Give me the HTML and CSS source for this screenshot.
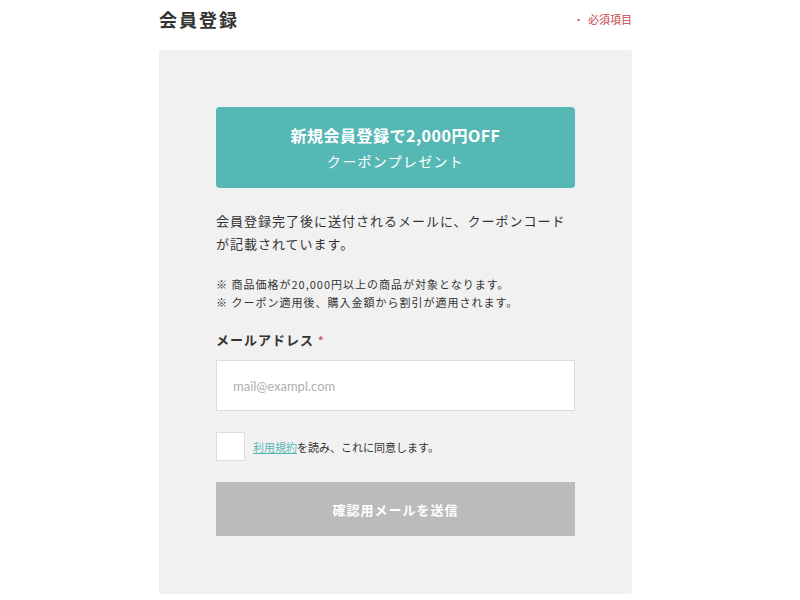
FILE: index.html
```html
<!DOCTYPE html>
<html lang="ja">
<head>
    <meta charset="UTF-8">
    <meta name="viewport" content="width=device-width, initial-scale=1.0">
    <title>会員登録</title>
    <link rel="stylesheet" href="styles.css">
</head>
<body>
    <div class="register">
        <!-- Heading -->
        <div class="register-head">
            <h1 class="register-title">会員登録</h1>
            <span class="required-note"><span class="required-dot">•</span>必須項目</span>
        </div>

        <!-- Form panel -->
        <div class="register-panel">
            <div class="coupon-banner">
                <p class="coupon-main">新規会員登録で2,000円OFF</p>
                <p class="coupon-sub">クーポンプレゼント</p>
            </div>

            <p class="lead">会員登録完了後に送付されるメールに、クーポンコードが記載されています。</p>

            <ul class="notes">
                <li>※ 商品価格が20,000円以上の商品が対象となります。</li>
                <li>※ クーポン適用後、購入金額から割引が適用されます。</li>
            </ul>

            <label class="field-label" for="email">メールアドレス<span class="mark">*</span></label>
            <input class="field-input" type="email" id="email" placeholder="mail@exampl.com">

            <label class="agree">
                <span class="agree-box"></span>
                <span class="agree-text"><a href="#" class="agree-link">利用規約</a>を読み、これに同意します。</span>
            </label>

            <button class="submit-btn" type="button" disabled>確認用メールを送信</button>
        </div>
    </div>
</body>
</html>
```

FILE: styles.css
```css
* {
    margin: 0;
    padding: 0;
    box-sizing: border-box;
}

body {
    background-color: #ffffff;
    color: #333333;
    font-family: 'Noto Sans CJK JP', 'Noto Sans', sans-serif;
}

.register {
    width: 473px;
    margin-left: 159px;
}

/* Heading */
.register-head {
    display: flex;
    align-items: center;
    justify-content: space-between;
    height: 37px;
    margin-bottom: 13px;
}

.register-title {
    font-size: 18px;
    font-weight: 700;
    letter-spacing: 2px;
    color: #333;
    line-height: 1;
}

.required-note {
    font-size: 11px;
    color: #c9474a;
    display: flex;
    align-items: center;
}

.required-dot {
    font-size: 8px;
    margin-right: 8px;
}

/* Panel */
.register-panel {
    background-color: #f1f1f1;
    border-radius: 3px;
    padding: 57px 57px 58px;
}

.coupon-banner {
    background-color: #56b8b5;
    border-radius: 4px;
    height: 81px;
    display: flex;
    flex-direction: column;
    align-items: center;
    justify-content: center;
    color: #ffffff;
}

.coupon-main {
    font-size: 16px;
    font-weight: 700;
    letter-spacing: 0.5px;
    line-height: 26px;
}

.coupon-sub {
    font-size: 14px;
    letter-spacing: 1.3px;
    line-height: 26px;
}

.lead {
    margin-top: 21px;
    font-size: 13px;
    line-height: 23px;
    letter-spacing: 1px;
    color: #333;
}

.notes {
    list-style: none;
    margin-top: 20px;
    font-size: 11px;
    line-height: 18px;
    letter-spacing: 1px;
    color: #333;
}

.field-label {
    display: block;
    margin-top: 19px;
    font-size: 13px;
    font-weight: 700;
    letter-spacing: 1px;
    line-height: 20px;
}

.mark {
    color: #d05a5a;
    font-size: 11px;
    margin-left: 4px;
    vertical-align: top;
}

.field-input {
    display: block;
    width: 100%;
    height: 51px;
    margin-top: 10px;
    border: 1px solid #dddddd;
    background-color: #ffffff;
    padding: 0 16px;
    font-family: 'Lato', sans-serif;
    font-size: 13px;
    color: #333;
    outline: none;
}

.field-input::placeholder {
    color: #b0b0b0;
}

.agree {
    display: flex;
    align-items: center;
    margin-top: 21px;
    cursor: pointer;
}

.agree-box {
    width: 29px;
    height: 29px;
    background-color: #ffffff;
    border: 1px solid #dddddd;
    margin-right: 8px;
    flex-shrink: 0;
}

.agree-text {
    font-size: 11px;
    color: #333;
}

.agree-link {
    color: #56b8b5;
    text-decoration: underline;
}

.submit-btn {
    display: block;
    width: 100%;
    height: 54px;
    margin-top: 21px;
    border: none;
    background-color: #bbbbbb;
    color: #ffffff;
    font-family: 'Noto Sans CJK JP', sans-serif;
    font-size: 13px;
    font-weight: 700;
    letter-spacing: 1px;
    line-height: 1;
}
```
